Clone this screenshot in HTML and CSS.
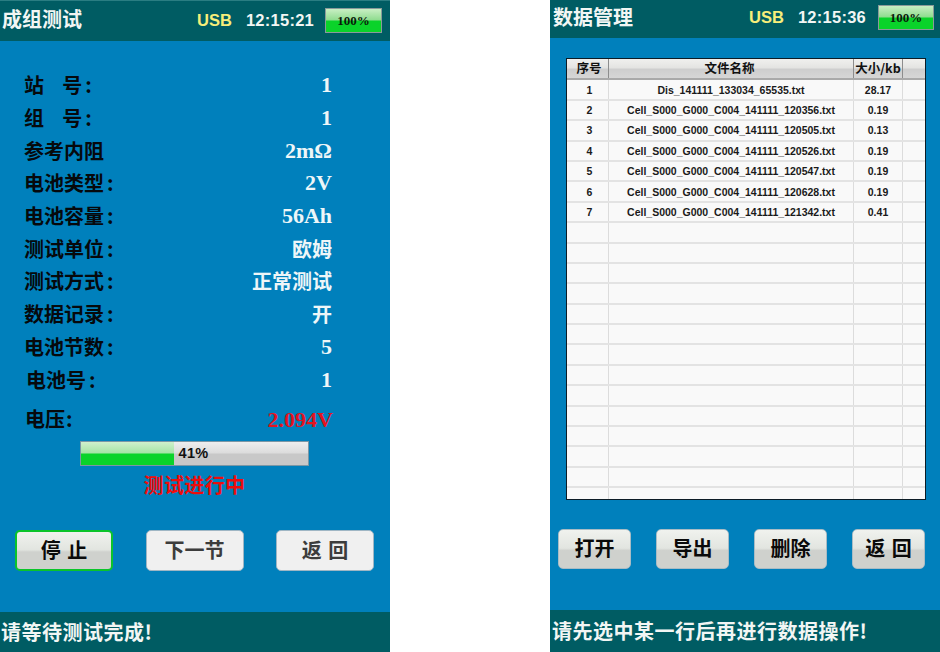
FILE: index.html
```html
<!DOCTYPE html>
<html lang="zh">
<head>
<meta charset="utf-8">
<title>成组测试 / 数据管理</title>
<link rel="stylesheet" href="styles.css">
</head>
<body>
<main class="desk">
  <section class="screen screen-test">
    <header class="top top-test">
      <h1 class="title">成组测试</h1>
      <span class="usb">USB</span>
      <span class="clock">12:15:21</span>
      <span class="battery"><span class="battery-text">100%</span></span>
    </header>
    <div class="body body-test">
      <dl class="params">
        <div class="param"><dt>站&nbsp;&nbsp;&nbsp;&nbsp;号<span class="colon">:</span></dt><dd>1</dd></div>
        <div class="param"><dt>组&nbsp;&nbsp;&nbsp;&nbsp;号<span class="colon">:</span></dt><dd>1</dd></div>
        <div class="param"><dt>参考内阻</dt><dd>2mΩ</dd></div>
        <div class="param"><dt>电池类型<span class="colon">:</span></dt><dd>2V</dd></div>
        <div class="param"><dt>电池容量<span class="colon">:</span></dt><dd>56Ah</dd></div>
        <div class="param"><dt>测试单位<span class="colon">:</span></dt><dd class="cjk">欧姆</dd></div>
        <div class="param"><dt>测试方式<span class="colon">:</span></dt><dd class="cjk">正常测试</dd></div>
        <div class="param"><dt>数据记录<span class="colon">:</span></dt><dd class="cjk">开</dd></div>
        <div class="param"><dt>电池节数<span class="colon">:</span></dt><dd>5</dd></div>
        <div class="param param-shift"><dt>电池号<span class="colon">:</span></dt><dd>1</dd></div>
      </dl>
      <div class="voltage"><span class="voltage-label">电压<span class="colon">:</span></span><span class="voltage-value">2.094V</span></div>
      <div class="progress"><div class="progress-fill"></div><span class="progress-text">41%</span></div>
      <p class="status">测试进行中</p>
      <div class="actions actions-test">
        <button class="btn btn-focus">停 止</button>
        <button class="btn btn-off">下一节</button>
        <button class="btn btn-off">返 回</button>
      </div>
    </div>
    <footer class="foot foot-test">请等待测试完成!</footer>
  </section>

  <section class="screen screen-data">
    <header class="top top-data">
      <h1 class="title">数据管理</h1>
      <span class="usb">USB</span>
      <span class="clock">12:15:36</span>
      <span class="battery"><span class="battery-text">100%</span></span>
    </header>
    <div class="body body-data">
      <div class="table">
        <div class="row head"><span>序号</span><span>文件名称</span><span>大小/kb</span><span></span></div>
        <div class="row"><span>1</span><span>Dis_141111_133034_65535.txt</span><span>28.17</span><span></span></div>
        <div class="row"><span>2</span><span>Cell_S000_G000_C004_141111_120356.txt</span><span>0.19</span><span></span></div>
        <div class="row"><span>3</span><span>Cell_S000_G000_C004_141111_120505.txt</span><span>0.13</span><span></span></div>
        <div class="row"><span>4</span><span>Cell_S000_G000_C004_141111_120526.txt</span><span>0.19</span><span></span></div>
        <div class="row"><span>5</span><span>Cell_S000_G000_C004_141111_120547.txt</span><span>0.19</span><span></span></div>
        <div class="row"><span>6</span><span>Cell_S000_G000_C004_141111_120628.txt</span><span>0.19</span><span></span></div>
        <div class="row"><span>7</span><span>Cell_S000_G000_C004_141111_121342.txt</span><span>0.41</span><span></span></div>
        <div class="row"><span></span><span></span><span></span><span></span></div>
        <div class="row"><span></span><span></span><span></span><span></span></div>
        <div class="row"><span></span><span></span><span></span><span></span></div>
        <div class="row"><span></span><span></span><span></span><span></span></div>
        <div class="row"><span></span><span></span><span></span><span></span></div>
        <div class="row"><span></span><span></span><span></span><span></span></div>
        <div class="row"><span></span><span></span><span></span><span></span></div>
        <div class="row"><span></span><span></span><span></span><span></span></div>
        <div class="row"><span></span><span></span><span></span><span></span></div>
        <div class="row"><span></span><span></span><span></span><span></span></div>
        <div class="row"><span></span><span></span><span></span><span></span></div>
        <div class="row"><span></span><span></span><span></span><span></span></div>
        <div class="row"><span></span><span></span><span></span><span></span></div>
        <div class="row"><span></span><span></span><span></span><span></span></div>
      </div>
      <div class="actions actions-data">
        <button class="btn">打开</button>
        <button class="btn">导出</button>
        <button class="btn">删除</button>
        <button class="btn">返 回</button>
      </div>
    </div>
    <footer class="foot foot-data">请先选中某一行后再进行数据操作!</footer>
  </section>
</main>
</body>
</html>
```

FILE: styles.css
```css
* { box-sizing: border-box; }

html, body {
  margin: 0;
  padding: 0;
  background: #fff;
}

body {
  width: 940px;
  height: 652px;
  overflow: hidden;
  font-family: "Liberation Serif", "Noto Sans CJK SC", serif;
}

.desk {
  display: flex;
  gap: 160px;
  height: 652px;
}

.screen {
  width: 390px;
  height: 652px;
  display: flex;
  flex-direction: column;
  background: #0080bc;
}

/* header */
.top {
  display: flex;
  align-items: center;
  flex: none;
  background: #005c63;
  color: #f2f6f4;
}

.top-test { height: 41px; padding: 0 8px 1px 2px; border-top: 1px solid #2a7d82; }
.top-data { height: 38px; padding: 0 6px 3px 3px; }

.title {
  margin: 0 auto 0 0;
  font: bold 20px/24px "Noto Sans CJK SC", sans-serif;
  padding-bottom: 3px;
}

.top-data .title { padding-bottom: 1px; }

.usb {
  font: bold 16.5px "Liberation Sans", sans-serif;
  color: #f7ee7a;
  margin-right: 14px;
}

.clock {
  font: bold 16.5px "Liberation Sans", sans-serif;
  letter-spacing: 0.25px;
  color: #f2f6f4;
  margin-right: 11px;
}

.top-data .clock { margin-right: 12px; }

.battery {
  width: 57px;
  height: 25px;
  display: flex;
  align-items: center;
  justify-content: center;
  border: 1px solid #8a9a9a;
  background: linear-gradient(#c9efc4 0, #8fdc8f 48%, #0ad32a 52%, #0ad32a 100%);
}

.top-data .battery { width: 56px; }

.battery-text {
  font: bold 13px "Liberation Serif", serif;
  color: #0a1a0a;
}

/* body */
.body {
  flex: 1;
  display: flex;
  flex-direction: column;
  min-height: 0;
}

.body-test { padding: 28px 58px 0 24px; position: relative; }
.body-data { padding: 20px 14px 0 16px; }

.params { margin: 0; }

.param {
  display: flex;
  justify-content: space-between;
  align-items: center;
  height: 32.7px;
}

.param-shift dt { padding-left: 2px; }

.param dt {
  font: bold 20px/24px "Noto Sans CJK SC", sans-serif;
  color: #06090c;
}

.colon {
  margin-left: 3px;
}

.param dd {
  margin: 0;
  font: bold 22px/24px "Liberation Serif", serif;
  color: #eef6f8;
}

.param dd.cjk {
  font: bold 20px/24px "Noto Sans CJK SC", sans-serif;
}

.voltage {
  display: flex;
  justify-content: space-between;
  align-items: center;
  margin-top: 8px;
  height: 32px;
  padding-left: 1px;
}

.voltage-label {
  font: bold 20px/24px "Noto Sans CJK SC", sans-serif;
  padding-bottom: 2px;
  color: #06090c;
}

.voltage-label .colon { margin-left: 1px; }

.voltage-value {
  font: bold 22px/24px "Liberation Serif", serif;
  color: #e3131f;
  margin-right: -1px;
}

.progress {
  position: relative;
  width: 229px;
  height: 25px;
  margin: 5px 0 0 56px;
  display: flex;
  align-items: center;
  justify-content: center;
  border: 1px solid #7c97a5;
  background: linear-gradient(#eeeeee 0, #dcdcdc 48%, #c8c8c8 52%, #c8c8c8 100%);
}

.progress-fill {
  position: absolute;
  left: 0;
  top: 0;
  bottom: 0;
  width: 41%;
  background: linear-gradient(#d0f0cc 0, #a6e4a6 48%, #0ad32a 52%, #0ad32a 100%);
}

.progress-text {
  position: relative;
  left: -1px;
  font: bold 14.5px "Liberation Sans", sans-serif;
  letter-spacing: 0.3px;
  color: #111;
}

.status {
  margin: 7px 0 0 56px;
  width: 229px;
  text-align: center;
  font: bold 20px/24px "Noto Sans CJK SC", sans-serif;
  letter-spacing: 0.4px;
  color: #ee0c0c;
}

.actions {
  display: flex;
  justify-content: space-between;
}

.actions-test {
  position: absolute;
  left: 15px;
  right: 16px;
  bottom: 41px;
}

.actions-data {
  margin: 29px 1px 0 -8px;
}

.btn {
  padding: 0 0 3px;
  border: 1px solid #a9bcc5;
  border-radius: 5px;
  background: linear-gradient(#f0f2ee 0, #e2e5e0 48%, #cfd1cd 54%, #cfd1cd 100%);
  font: bold 20px/24px "Noto Sans CJK SC", sans-serif;
  word-spacing: 2px;
  color: #0a0a0a;
  height: 40px;
  width: 73px;
}

.actions-test .btn { width: 98px; height: 41px; padding: 0 0 1px; }

.btn.btn-focus {
  border: 2px solid #0bc42a;
}

.btn.btn-off {
  background: #f0f0f0;
  color: #3c3c3c;
  border-color: #9fb6c4;
}

/* table */
.table {
  width: 360px;
  height: 442px;
  overflow: hidden;
  border: 1px solid #0c1c26;
  background: #f9f9f9;
}

.row {
  display: grid;
  grid-template-columns: 42px 245px 49px 1fr;
  height: 20.4px;
  border-bottom: 2px solid #e3e3e3;
}

.row > span {
  display: flex;
  align-items: center;
  justify-content: center;
  border-right: 1px solid #dcdcdc;
  font: bold 10.5px "Liberation Sans", sans-serif;
  color: #1a1a1a;
  white-space: nowrap;
}

.row > span:first-child { padding-left: 4px; }
.row > span:last-child { border-right: 0; }

.row.head {
  height: 21.4px;
  border-bottom: 2px solid #a9a9a9;
  background: linear-gradient(#f0f0ee 0, #e4e4e2 45%, #cecece 55%, #d6d6d6 100%);
}

.row.head > span {
  font: bold 12.5px/16px "Noto Sans CJK SC", sans-serif;
  padding-bottom: 2px;
  color: #111;
  border-right: 1px solid #8d8d8d;
}

.row.head > span:first-child { padding-left: 3px; }
.row.head > span:nth-child(2) { padding-right: 3px; }
.row.head > span:last-child { border-right: 0; }

/* footer */
.foot {
  flex: none;
  display: flex;
  align-items: center;
  background: #005c63;
  color: #f2f6f4;
  font: bold 20px/24px "Noto Sans CJK SC", sans-serif;
}

.foot-test { height: 40px; padding: 0 0 0 1px; letter-spacing: 0.5px; }
.foot-data { height: 42px; padding: 0 0 0 2px; letter-spacing: 0.5px; }
```
